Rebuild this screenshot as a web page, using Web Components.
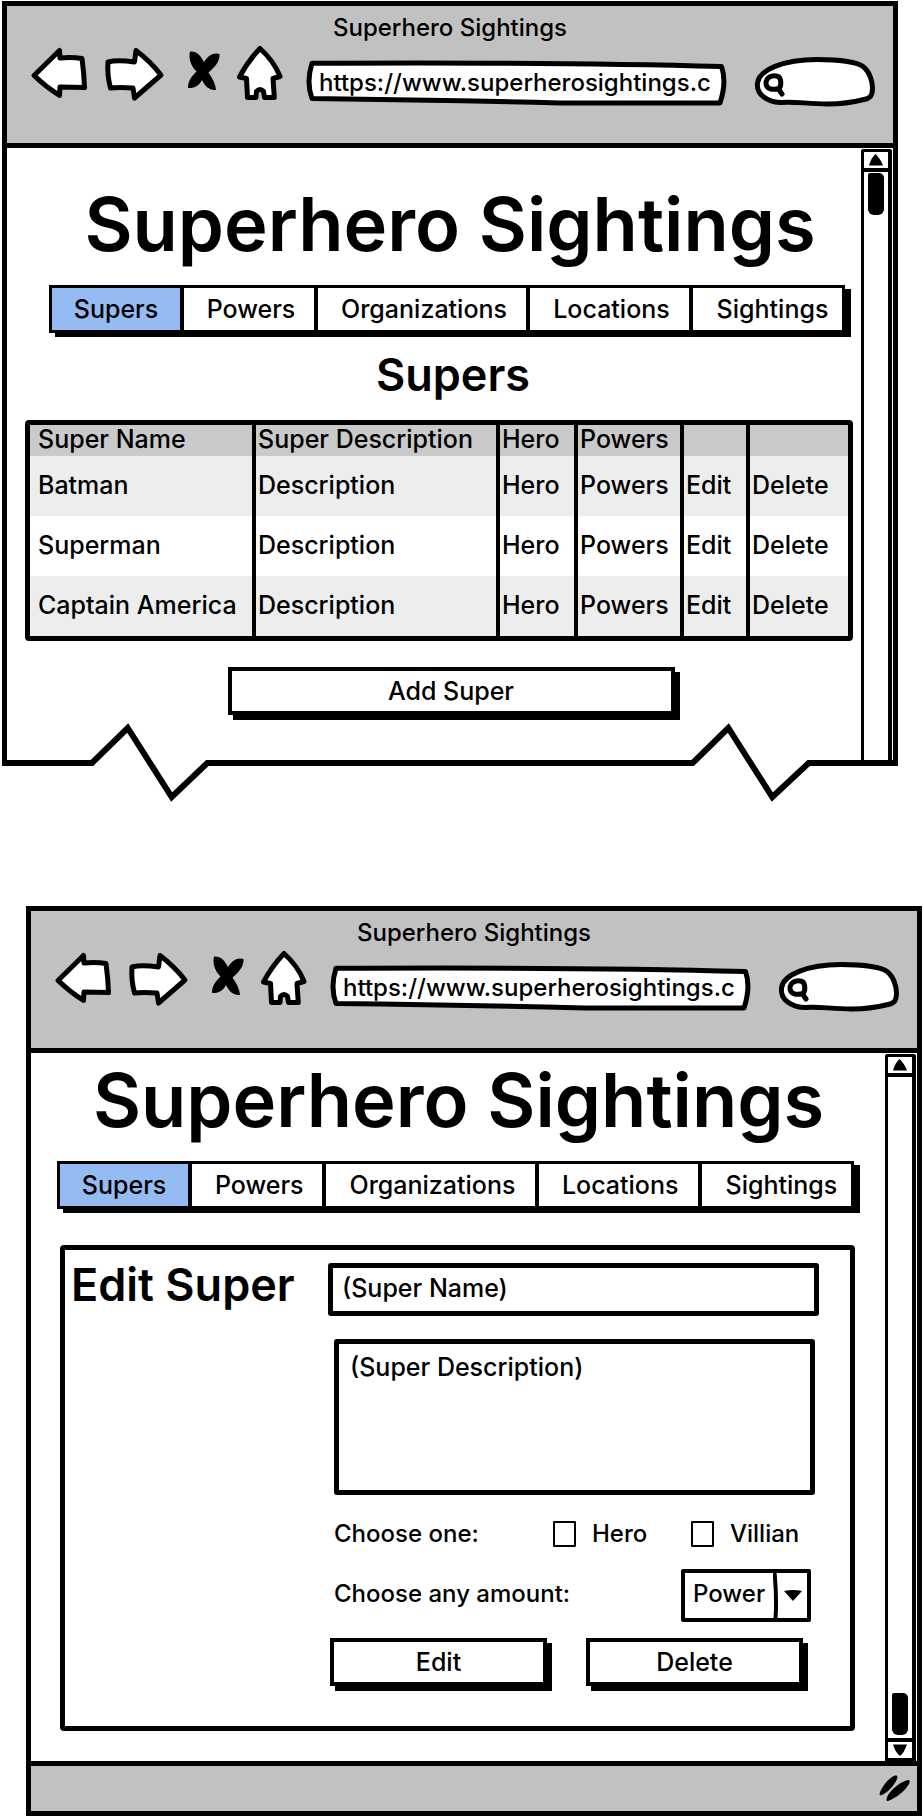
<!DOCTYPE html>
<html lang="en">
<head>
<meta charset="utf-8">
<meta name="viewport" content="width=device-width, initial-scale=1">
<title>Superhero Sightings wireframes</title>
<style>
  :root {
    --ink: #000;
    --chrome: #c1c1c1;
    --selected: #94bbf2;
    --text-s: 24px;
    --text-m: 25px;
    --text-l: 45px;
    --text-xl: 74px;
  }
  body {
    margin: 0;
    background: #fff;
    color: var(--ink);
    font: 500 var(--text-m)/30px Inter, "Open Sans", sans-serif;
  }
  .list-screen { margin: 1px 26px 143px 2px; }
  .edit-screen { margin: 0 2px 2px 26px; }
  .list-screen main { padding-bottom: 48px; }
  .list-screen site-header { margin: 36px 16px 0 42px; }
  .list-screen h2 { margin: 15px 10px 18px 48px; font-size: var(--text-l); font-weight: 600; line-height: 54px; text-align: center; }
  .list-screen supers-table { margin: 0 8px 26px 18px; }
  .list-screen .actions { margin: 0 10px 0 44px; }
  .list-screen sketch-button { width: 447px; margin: 0 auto; }
  .edit-screen site-header { margin: 7px 31px 36px 26px; }
  .edit-screen super-form { margin: 0 30px 0 29px; }
  .edit-screen main { padding-bottom: 30px; }
</style>
</head>
<body>

<browser-window class="list-screen" heading="Superhero Sightings" url="https://www.superherosightings.c" torn>
  <main>
    <site-header></site-header>
    <h2>Supers</h2>
    <supers-table></supers-table>
    <div class="actions"><sketch-button>Add Super</sketch-button></div>
  </main>
</browser-window>

<browser-window class="edit-screen" heading="Superhero Sightings" url="https://www.superherosightings.c">
  <main>
    <site-header></site-header>
    <super-form></super-form>
  </main>
</browser-window>

<template id="browser-window">
  <style>
    :host { display: block; position: relative; border: 5px solid var(--ink); }
    :host([torn]) { border-bottom: 0; }
    header { background: var(--chrome); border-bottom: 5px solid var(--ink); padding: 7px 18px 36px 25px; }
    .heading { font-size: var(--text-s); text-align: center; margin-right: 7px; }
    .toolbar { display: flex; height: 61px; margin-top: 3px; }
    button { display: block; padding: 0; border: 0; background: none; height: 56px; }
    svg { display: block; overflow: visible; }
    .shape { fill: #fff; stroke: var(--ink); stroke-width: 5px; stroke-linejoin: round; stroke-linecap: round; vector-effect: non-scaling-stroke; }
    .back { margin-right: 17px; }
    .forward { margin-right: 25px; }
    .stop { margin-right: 17px; }
    .home { margin-right: 23px; }
    .field { position: relative; align-self: flex-end; height: 46px; }
    .field svg { position: absolute; inset: 0; width: 100%; height: 100%; }
    .address { flex: 1; min-width: 0; margin-right: 29px; }
    .search { width: 120px; height: 50px; }
    input { position: relative; box-sizing: border-box; width: 100%; height: 100%; margin: 0; border: 0; background: none; color: inherit; font: inherit; font-size: var(--text-s); outline: 0; padding: 0 12px 4px 13px; }
    .search input { padding-left: 32px; }
    .body { display: grid; grid-template-columns: minmax(0, 1fr) 32px; }
    .torn { position: absolute; left: -5px; bottom: -38px; width: calc(100% + 10px); height: 80px; pointer-events: none; }
    footer { background: var(--chrome); border-top: 5px solid var(--ink); height: 45px; display: flex; justify-content: flex-end; align-items: center; padding-right: 6px; }
    :host([torn]) footer, :host(:not([torn])) .torn { display: none; }
  </style>
  <header>
    <div class="heading"></div>
    <div class="toolbar">
      <button class="back" aria-label="Back"><svg width="56" height="56" viewBox="32 46 56 56"><path class="shape" d="M34 75.5 59.5 50.5 60 58Q72 57 82 58.5 84 73 84.5 87.5L60 87 59.5 95.5Q46 87 34 75.5Z"/></svg></button>
      <button class="forward" aria-label="Forward"><svg width="58" height="56" viewBox="105 46 58 56"><path class="shape" d="M108 62Q117 59.5 134.5 62L136 50.5Q150 61 161 75L134.5 98 133 88Q119 87 110.5 88 107 75 108 62Z"/></svg></button>
      <button class="stop" aria-label="Stop"><svg width="32" height="56" viewBox="188 46 32 56"><path d="M190 51.5C197 51 201 56 204 62 208 55 214 52 219.5 54 220 62 214 68 208.500 72.5 213 79 215.5 84 216 90 209 90.5 205 86 202 80 199 86 194 88.5 188 88 188 81 191 77 196.500 71.5 190 65 188.5 57 190 51.5Z"/></svg></button>
      <button class="home" aria-label="Home"><svg width="46" height="56" viewBox="237 46 46 56"><path class="shape" d="M260 48.5Q274 61 280 76.5L273 78.5 274.3 97.5H264.5L263.5 91.5Q260 87.5 256.5 91.5L256 97.5H247.5L246.5 78.5 239.5 77Q248 61 260 48.5Z"/></svg></button>
      <div class="field address">
        <svg viewBox="306 61 420 46" preserveAspectRatio="none"><path class="shape" d="M312 63.3Q560 62 721.500 66.5 727 82 720 103L560 103Q440 100 312 98.5 306 82 312 63.3Z"/></svg>
        <input class="url" type="text" aria-label="Address">
      </div>
      <div class="field search">
        <svg viewBox="755 57 120 50" preserveAspectRatio="none"><path class="shape" d="M757.5 83C759 70 783 59.5 817 59.5 838 59.5 857 62 863 66.5 870 72 872.500 82 872.5 88 872.5 97 869 98.5 864 99.5 850 103 840 104 828 104 806 104 795 101 780 102.5 768 102 756 95 757.5 83Z"/><path class="shape" d="M772.5 76q7-1 8 4q1 5-1 8q-4 2-9 1q-5-2-4.500-7q1-5 6.500-6zM778.5 89l3.500 5"/></svg>
        <input type="search" aria-label="Search">
      </div>
    </div>
  </header>
  <div class="body"><slot></slot><sketch-scrollbar></sketch-scrollbar></div>
  <svg class="torn" viewBox="0 720 896 80" preserveAspectRatio="none"><path fill="none" stroke="#000" stroke-width="6" stroke-miterlimit="10" d="M0 762H90L125.7 727 169.7 796 205.3 762H690.7L726.3 727 770.3 796 806.7 762H896"/></svg>
  <footer><svg width="32" height="28" viewBox="0 0 32 28"><path d="M16 .5C18 0 19 1 18 4 15 11 9 17 3 20 0 21 0 19 2 15 5 9 10 3 16 .5ZM29 5C31 5 31 7 30 9 26 16 17 23 9 26 7 26 7 24 9 20 14 13 21 7 29 5Z"/></svg></footer>
</template>

<template id="sketch-scrollbar">
  <style>
    :host { display: flex; flex-direction: column; box-sizing: border-box; margin: 1px 1px 0 0; border: solid var(--ink); border-width: 3px 4px 0 3px; border-radius: 3px 3px 0 0; }
    button { display: grid; place-items: center; width: 100%; height: 20px; padding: 0; border: 0; border-bottom: 4px solid var(--ink); background: #fff; }
    .down { border-bottom: 3px solid var(--ink); border-top: 4px solid var(--ink); height: 23px; }
    .thumb { width: 16px; height: 42px; margin: 1px auto 3px 4px; background: var(--ink); border-radius: 2px 5px 6px 6px; }
    :host([end]) .thumb { margin-top: auto; }
    :host(:not([end])) .down { display: none; }
  </style>
  <button class="up" aria-label="Scroll up"><svg width="14" height="12" viewBox="0 0 14 12"><path d="M6.5 0Q11 4 14 11.5H0Q2 4 6.5 0Z"/></svg></button>
  <div class="thumb"></div>
  <button class="down" aria-label="Scroll down"><svg width="14" height="12" viewBox="0 0 14 12"><path d="M0 .5H14Q11 9 7 12 2 8 0 .5Z"/></svg></button>
</template>

<template id="site-header">
  <style>
    :host { display: block; }
    h1 { margin: 0 -6px 21px 0; font-size: var(--text-xl); font-weight: 600; line-height: 80px; text-align: center; white-space: nowrap; }
    nav { display: grid; grid-template-columns: 128fr 134fr 212fr 163fr 153fr; height: 42px; border: 3px solid var(--ink); box-shadow: 6px 4px 0 var(--ink); }
    a { display: grid; place-items: center; color: inherit; text-decoration: none; }
    a + a { border-left: 4px solid var(--ink); padding-left: 4px; }
    a:last-child { padding-left: 10px; }
    a[aria-current] { background: var(--selected); }
  </style>
  <h1>Superhero Sightings</h1>
  <nav>
    <a href="#supers" aria-current="page">Supers</a>
    <a href="#powers">Powers</a>
    <a href="#organizations">Organizations</a>
    <a href="#locations">Locations</a>
    <a href="#sightings">Sightings</a>
  </nav>
</template>

<template id="sketch-button">
  <style>
    :host { display: block; }
    button { display: block; box-sizing: border-box; width: 100%; height: 48px; padding: 0; border: 4px solid var(--ink); background: #fff; box-shadow: 5px 5px 0 var(--ink); color: inherit; font: inherit; }
  </style>
  <button type="button"><slot></slot></button>
</template>

<template id="supers-table">
  <style>
    :host { display: block; }
    table { width: 100%; table-layout: fixed; border: 5px solid var(--ink); border-radius: 4px; border-spacing: 0; }
    th, td { height: 60px; padding: 0 0 2px 2px; box-sizing: border-box; text-align: left; font-weight: inherit; white-space: nowrap; }
    th { height: 31px; padding-bottom: 3px; line-height: 28px; background: #cacaca; }
    th + th, td + td { border-left: 4px solid var(--ink); }
    th:first-child, td:first-child { padding-left: 8px; }
    tbody tr:nth-child(odd) { background: #ededed; }
    .name { width: 222px; } .hero { width: 78px; } .powers { width: 106px; } .edit { width: 66px; } .delete { width: 102px; }
    a { color: inherit; text-decoration: none; }
  </style>
  <table>
    <colgroup><col class="name"><col><col class="hero"><col class="powers"><col class="edit"><col class="delete"></colgroup>
    <thead><tr><th>Super Name</th><th>Super Description</th><th>Hero</th><th>Powers</th><th></th><th></th></tr></thead>
    <tbody></tbody>
  </table>
</template>

<template id="super-form">
  <style>
    :host { display: block; }
    form { display: grid; grid-template-columns: 263px minmax(0, 1fr); border: 5px solid var(--ink); border-radius: 4px; padding: 13px 31px 40px 0; }
    h2 { margin: -5px 0 0 6px; font-size: var(--text-l); font-weight: 600; line-height: 54px; white-space: nowrap; }
    input, textarea, select { box-sizing: border-box; margin: 0; color: inherit; font: inherit; background: #fff; border: 4px solid var(--ink); border-radius: 2px; outline: 0; }
    .name { display: block; width: 100%; height: 53px; padding: 0 9px 4px; border-width: 5px; border-radius: 3px; }
    .description { display: block; width: calc(100% - 10px); height: 156px; margin: 23px 4px 24px 6px; padding: 8px 11px; border-width: 5px; border-radius: 3px; resize: none; }
    .row { margin-left: 6px; font-size: var(--text-s); }
    .kind { display: grid; grid-template-columns: minmax(0, 1fr) 138px 128px; height: 30px; margin-bottom: 20px; }
    .kind label { display: flex; align-items: center; gap: 16px; }
    .kind input { appearance: none; width: 23px; height: 26px; border-width: 2px; border-radius: 1px; }
    .kind input:checked { background: var(--ink); }
    .powers { display: flex; justify-content: space-between; height: 53px; margin-right: 8px; margin-bottom: 16px; }
    .powers label { padding-top: 10px; }
    .select { position: relative; width: 130px; }
    select { appearance: none; width: 100%; height: 100%; padding: 0 38px 3px 8px; }
    .select svg { position: absolute; right: 0; top: 0; pointer-events: none; }
    .buttons { display: grid; grid-template-columns: 217px 217px; gap: 39px; margin-left: 2px; }
  </style>
  <form>
    <h2>Edit Super</h2>
    <div>
      <input class="name" type="text" aria-label="Super name" value="(Super Name)">
      <textarea class="description" aria-label="Super description">(Super Description)</textarea>
      <div class="row kind" role="group" aria-labelledby="kind">
        <span id="kind">Choose one:</span>
        <label><input type="checkbox">Hero</label>
        <label><input type="checkbox">Villian</label>
      </div>
      <div class="row powers">
        <label for="power">Choose any amount:</label>
        <div class="select">
          <select id="power"><option>Power</option></select>
          <svg width="38" height="53" viewBox="0 0 38 53"><path d="M1.5 3Q4 30 2.5 50" fill="none" stroke="#000" stroke-width="4"/><path d="M11 22Q20 20 29 22L20 32Z"/></svg>
        </div>
      </div>
      <div class="buttons"><sketch-button>Edit</sketch-button><sketch-button>Delete</sketch-button></div>
    </div>
  </form>
</template>

<script>
  // Base class: clones the template that carries the element's own name.
  class TemplateElement extends HTMLElement {
    constructor() {
      super();
      this.attachShadow({ mode: 'open' })
        .append(document.getElementById(this.localName).content.cloneNode(true));
    }
  }

  class BrowserWindow extends TemplateElement {
    connectedCallback() {
      this.shadowRoot.querySelector('.heading').textContent = this.getAttribute('heading');
      this.shadowRoot.querySelector('.url').value = this.getAttribute('url');
      this.shadowRoot.querySelector('sketch-scrollbar').toggleAttribute('end', !this.hasAttribute('torn'));
    }
  }

  class SupersTable extends TemplateElement {
    connectedCallback() {
      const rows = ['Batman', 'Superman', 'Captain America'].map(name => `
        <tr><td>${name}</td><td>Description</td><td>Hero</td><td>Powers</td>
        <td><a href="#edit">Edit</a></td><td><a href="#delete">Delete</a></td></tr>`);
      this.shadowRoot.querySelector('tbody').innerHTML = rows.join('');
    }
  }

  customElements.define('sketch-scrollbar', class extends TemplateElement {});
  customElements.define('sketch-button', class extends TemplateElement {});
  customElements.define('site-header', class extends TemplateElement {});
  customElements.define('super-form', class extends TemplateElement {});
  customElements.define('supers-table', SupersTable);
  customElements.define('browser-window', BrowserWindow);
</script>
</body>
</html>
